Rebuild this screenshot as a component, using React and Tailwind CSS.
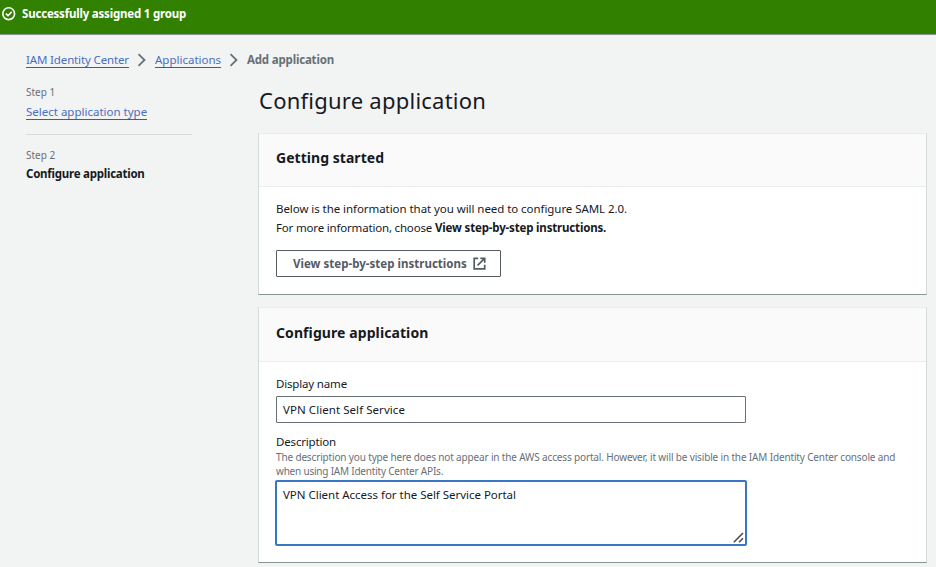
import React from "react";

function Chevron() {
  return (
    <svg className="h-[14px] w-[10px] shrink-0" viewBox="0 0 10 14" fill="none" stroke="#687078" strokeWidth="1.8">
      <path d="M1.5 1.2 L7.5 7 L1.5 12.8" />
    </svg>
  );
}

function Card({ title, children, className }) {
  return (
    <section className={"flex flex-col border border-t-[#eaeded] border-x-[#d5dbdb] border-b-[#879596] bg-white " + className}>
      <header className="border-b border-[#eaeded] bg-[#fafafa] pl-[17px]">{title}</header>
      {children}
    </section>
  );
}

export default function App() {
  return (
    <div className="flex h-[567px] w-[936px] flex-col overflow-hidden bg-[#f2f3f3] font-['Noto_Sans',sans-serif] text-[11.5px] leading-[18px] whitespace-nowrap text-[#16191f]">
      <div className="flex h-[35px] shrink-0 items-start border-b border-[#879596] bg-[#318000] pt-[5px] pl-[2px] text-white">
        <svg className="mt-[1px] mr-[7px] h-[15px] w-[14px]" viewBox="0 0 14 15" fill="none" stroke="currentColor" strokeWidth="1.6">
          <circle cx="6.7" cy="7.7" r="5.9" />
          <path d="M3.8 7.6 L6 9.7 L9.7 5.9" />
        </svg>
        <p className="ml-[-1px] font-bold tracking-[-0.2px]">Successfully assigned 1 group</p>
      </div>

      <nav className="mt-[15px] ml-[26px] flex h-[20px] shrink-0 items-start">
        <a className="h-[18px] w-[103px] border-b border-[#0073bb] pt-px tracking-[-0.14px] text-[#4a6fbe]">IAM Identity Center</a>
        <span className="w-[26px] pt-[3px] pl-[8px]"><Chevron /></span>
        <a className="h-[18px] w-[66px] border-b border-[#0073bb] pt-px text-[#4a6fbe]">Applications</a>
        <span className="w-[26px] pt-[3px] pl-[8px]"><Chevron /></span>
        <span className="pt-px font-bold tracking-[-0.18px] text-[#687078]">Add application</span>
      </nav>

      <div className="flex">
        <aside className="ml-[26px] w-[166px] shrink-0 pt-[13px]">
          <p className="h-[19px] text-[10px] text-[#687078]">Step 1</p>
          <a className="block h-[18px] w-[121px] border-b border-[#0073bb] pt-px text-[#4a6fbe]">Select application type</a>
          <div className="mt-[14px] h-px bg-[#d5dbdb]" />
          <p className="mt-[11px] h-[19px] text-[10px] text-[#687078]">Step 2</p>
          <p className="font-bold tracking-[-0.24px]">Configure application</p>
        </aside>

        <main className="ml-[66px] flex w-[669px] flex-col pt-[14px]">
          <h1 className="mb-[17px] h-[32px] pl-[1px] text-[22px] leading-[32px] tracking-[0.24px]">Configure application</h1>

          <Card
            className="h-[162px]"
            title={<h2 className="h-[52px] pt-[14px] text-[14px] leading-[20px] font-bold tracking-[0.04px]">Getting started</h2>}
          >
            <div className="pt-[13px] pl-[17px] text-[#16191f]">
              <p className="h-[19px] tracking-[-0.06px]">Below is the information that you will need to configure SAML 2.0.</p>
              <p className="flex h-[19px]">
                <span className="w-[159px] tracking-[-0.18px]">For more information, choose</span>
                <b className="font-bold tracking-[-0.17px]">View step-by-step instructions.</b>
              </p>
              <button className="mt-[12px] flex h-[27px] w-[225px] items-center rounded-[1px] border border-[#545b64] pl-[16px] text-[#545b64]">
                <span className="w-[180px] text-left font-bold tracking-[0.02px]">View step-by-step instructions</span>
                <svg className="h-[13px] w-[13px]" viewBox="0 0 13 13" fill="none" stroke="currentColor" strokeWidth="1.7">
                  <path d="M5.2 1.3 H1.2 V11.8 H11.7 V7.8" />
                  <path d="M7.3 1.3 H11.7 V5.7 M11.5 1.5 L4.6 8.4" />
                </svg>
              </button>
            </div>
          </Card>

          <Card
            className="mt-[12px] h-[256px]"
            title={<h2 className="h-[53px] pt-[15px] text-[14px] leading-[20px] font-bold tracking-[0.09px]">Configure application</h2>}
          >
            <div className="flex flex-col pt-[13px] pl-[17px]">
              <label className="h-[21px] tracking-[-0.17px]">Display name</label>
              <div className="flex h-[27px] w-[470px] items-center rounded-[1px] border border-[#687078] pl-[6px] tracking-[0.06px]">
                VPN Client Self Service
              </div>
              <label className="mt-[10px] h-[17px] tracking-[-0.17px]">Description</label>
              <p className="h-[30px] text-[10px] leading-[14px] text-[#687078]">
                <span className="block tracking-[-0.15px]">
                  The description you type here does not appear in the AWS access portal. However, it will be visible in the IAM Identity Center console and
                </span>
                <span className="block tracking-[-0.21px]">when using IAM Identity Center APIs.</span>
              </p>
              <div className="ml-[-1px] flex h-[66px] w-[472px] justify-between rounded-[2px] border-2 border-[#3a76c3] pt-[4px] pl-[6px] tracking-[-0.025px]">
                <span>VPN Client Access for the Self Service Portal</span>
                <svg className="mr-[1px] mb-[1px] h-[11px] w-[11px] self-end" viewBox="0 0 11 11" fill="none" stroke="#4c4c4c" strokeWidth="1.6">
                  <path d="M0.8 10.2 L10 1 M6 10.2 L10 6.2" />
                </svg>
              </div>
            </div>
          </Card>
        </main>
      </div>
    </div>
  );
}
